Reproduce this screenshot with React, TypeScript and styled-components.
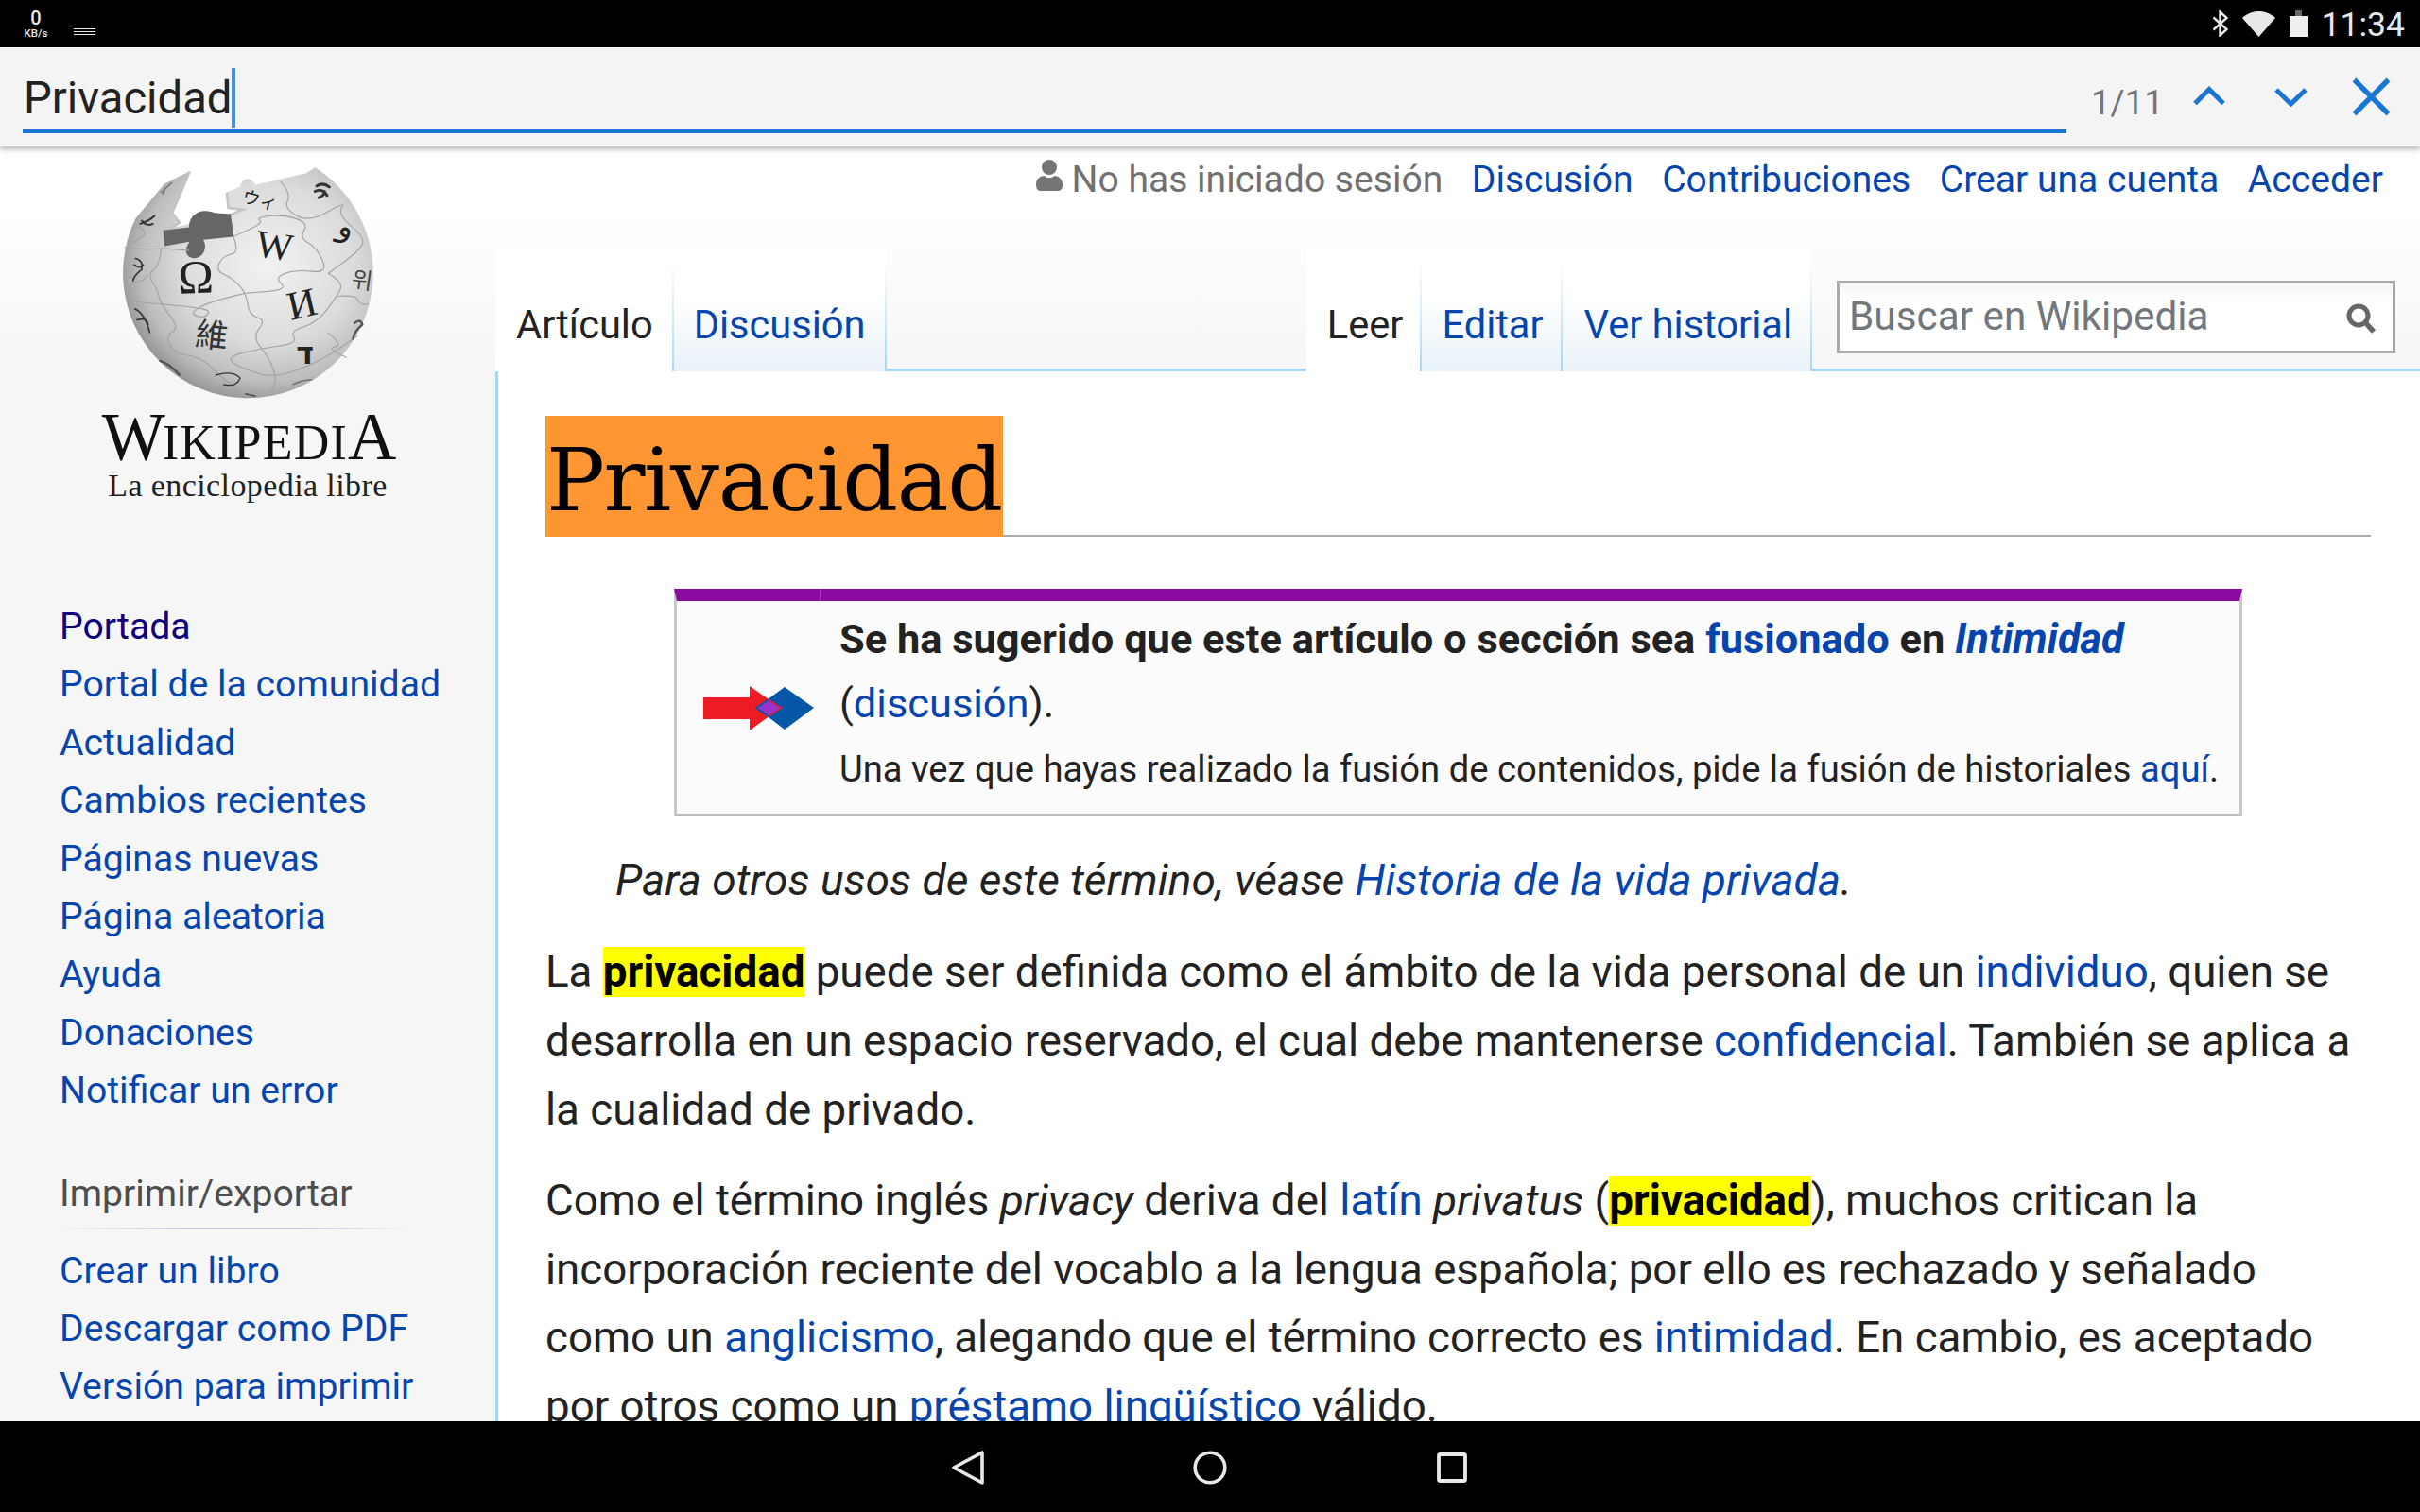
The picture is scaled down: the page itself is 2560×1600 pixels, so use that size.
import React from "react";
import styled, { createGlobalStyle } from "styled-components";

const Global = createGlobalStyle`
  html, body { margin: 0; padding: 0; background: #000; }
  body { font-family: Roboto, "Liberation Sans", sans-serif; color: #222; }
  a { color: #0645ad; text-decoration: none; }
  * { box-sizing: border-box; }
`;

const Screen = styled.div`
  width: 2560px; height: 1600px; display: flex; flex-direction: column; overflow: hidden; background: #fff;
`;

const StatusBar = styled.div`
  height: 50px; flex: none; background: #000; color: #e8e8e8; display: flex; align-items: center; padding: 0 16px 0 24px;
`;
const Speed = styled.div`
  width: 28px; display: flex; flex-direction: column; align-items: center; font-weight: 500; line-height: 1;
`;
const SpeedValue = styled.span` font-size: 20px; height: 21px; `;
const SpeedUnit = styled.span` font-size: 11.5px; white-space: nowrap; `;
const NotifyIcon = styled.svg` margin-left: 26px; margin-top: 16px; `;
const Spacer = styled.div` flex: 1; `;
const StatusIcon = styled.svg` display: block; flex: none; margin-left: ${(p: { $gap: number }) => p.$gap}px; `;
const Clock = styled.span` font-size: 35.5px; margin-left: 15px; line-height: 50px; padding-top: 2px; `;

const FindBar = styled.div`
  height: 105px; flex: none; background: #f4f4f4; box-shadow: 0 3px 5px rgba(0,0,0,.28); position: relative; z-index: 2;
  display: flex; padding: 0 31px 0 24px;
`;
const FindField = styled.div`
  width: 2163px; height: 91px; border-bottom: 4px solid #1976d2; display: flex; align-items: center; padding: 20px 0 0 1px;
  font-size: 47.2px; color: #222;
`;
const Caret = styled.span` width: 4px; height: 63px; background: #4a90d9; `;
const FindCount = styled.span` font-size: 36.5px; color: #757575; margin: 37px 0 0 26px; width: 108px; line-height: 43px; height: 43px;`;
const FindIcon = styled.svg` flex: none; margin-top: ${(p: { $top: number }) => p.$top}px; margin-left: ${(p: { $left?: number }) => p.$left ?? 0}px; `;

const Page = styled.div`
  flex: 1; min-height: 0; overflow: hidden; display: grid; grid-template-columns: 524px 1fr;
  background: linear-gradient(#fff 70px, #f6f6f6 237px);
`;

const Sidebar = styled.aside` padding-top: 10px; `;
const Globe = styled.svg` display: block; margin-left: 100px; `;
const Wordmark = styled.div`
  font-family: "Liberation Serif", serif; color: #111; display: flex; align-items: baseline; justify-content: center; width: 524px;
  height: 60px; line-height: 60px; font-size: 52px; letter-spacing: 1.2px;
`;
const BigCap = styled.span` font-size: 71px; letter-spacing: -3px; `;
const Tagline = styled.div`
  font-family: "Liberation Serif", serif; font-size: 34px; letter-spacing: 0.4px; color: #222; text-align: center; width: 524px; line-height: 44px;
`;
const NavList = styled.ul`
  list-style: none; margin: ${(p: { $top: number }) => p.$top}px 0 0; padding: 0 0 0 63px;
`;
const NavItem = styled.li`
  height: 61.4px; line-height: 61.4px; font-size: 39.2px; white-space: nowrap;
`;
const VisitedLink = styled.a` color: #0b0080; `;
const PortletTitle = styled.div`
  margin: 55px 0 0 63px; width: 370px; height: 74px; line-height: 45px; font-size: 39.2px; color: #4d4d4d;
  background: linear-gradient(to right, transparent, #c8ccd1 35%, #c8ccd1 70%, transparent) left 58px / 100% 2px no-repeat;
`;

const Main = styled.main` min-width: 0; display: flex; flex-direction: column; `;
const PersonalBar = styled.div`
  height: 107px; flex: none; display: flex; justify-content: flex-end; align-items: flex-start; gap: 30.5px; padding: 12px 39px 0 0; font-size: 39.1px; line-height: 46px;
`;
const LoginStatus = styled.span` display: flex; align-items: flex-start; color: #707070; `;
const UserIcon = styled.svg` margin: 2px 10px 0 0; display: block; `;
const TabRow = styled.div`
  height: 131px; flex: none; display: flex; border-bottom: 3px solid #a7d7f9; padding-right: 26px;
`;
const Tab = styled.a<{ $selected?: boolean; $left?: number; $right?: number }>`
  display: flex; align-items: center; padding: 32px ${(p) => p.$right ?? 21}px 0 ${(p) => p.$left ?? 21}px; margin-bottom: -3px; font-size: 41.6px; white-space: nowrap;
  color: ${(p) => (p.$selected ? "#222" : "#0645ad")};
  background: ${(p) => (p.$selected ? "#fff" : "linear-gradient(#fff 40%, #e8f2f8)")};
  border-right: 2px solid; border-image: linear-gradient(#fff0 10%, #a7d7f9) 1;
`;
const SearchBox = styled.div`
  width: 591px; height: 77px; margin: 35px 0 0 26px; border: 3px solid #aaa; background: linear-gradient(#f6f6f6, #fff 30%); flex: none;
  display: flex; align-items: center; justify-content: space-between; padding: 0 17px 3px 10px; font-size: 42.3px; color: #72777d;
`;
const SearchIcon = styled.svg` display: block; margin-top: 6px; `;

const Article = styled.article`
  flex: 1; background: #fff; border-left: 3px solid #a7d7f9; padding: 47px 52px 0 50px; font-size: 45.7px; line-height: 72.9px; color: #222;
`;
const Title = styled.h1`
  margin: 0; height: 128px; border-bottom: 2px solid #aaa; font-weight: 400; display: flex;
`;
const TitleMark = styled.span`
  height: 128px; width: 484px; background: #ff9632; color: #000; font-family: "DejaVu Serif", serif; font-size: 92px; line-height: 137px; padding: 0 0 0 1px; letter-spacing: -1.4px; display: block; white-space: nowrap;
`;
const NoticeBox = styled.section`
  margin: 55px 0 0 136px; width: 1659px; border-top: 13px solid #8b0a9f; border-left: 3px solid #c8c8c8; border-right: 3px solid #c8c8c8; border-bottom: 3px solid #bbb;
  background: #fbfbfb; display: flex; align-items: center; padding: 0 0 6px 28px; height: 241px; position: relative;
  &::before { content: ""; position: absolute; left: 151px; top: -13px; width: 1px; height: 13px; background: #a93cbb; }
`;
const NoticeIcon = styled.svg` flex: none; display: block; margin: 8px 26px 0 0; `;
const NoticeLine = styled.div<{ $small?: boolean; $bold?: boolean }>`
  height: 68.5px; line-height: 68.5px; white-space: nowrap;
  font-size: ${(p) => (p.$small ? "38.2px" : "43.4px")};
  font-weight: ${(p) => (p.$bold ? 700 : 400)};
`;
const Hatnote = styled.div` margin: 31px 0 0 74px; font-style: italic; font-size: 46.1px; `;
const Para = styled.p`
  margin: ${(p: { $top: number }) => p.$top}px 0 0;
  i { font-size: 46.1px; }
`;
const Hit = styled.b` background: #ffff00; color: #000; `;

const NavBar = styled.div`
  height: 96px; flex: none; background: #000; display: flex; justify-content: center; align-items: center; gap: 220px; padding: 1px 2px 0 0;
`;
const NavIcon = styled.svg` display: block; `;
const NavSquare = styled(NavIcon)` margin-left: 2px; `;

type Pt = [number, number];
const smooth = (pts: Pt[]) => {
  let d = `M${pts[0][0]} ${pts[0][1]}`;
  for (let i = 1; i < pts.length - 1; i++) {
    const mx = (pts[i][0] + pts[i + 1][0]) / 2;
    const my = (pts[i][1] + pts[i + 1][1]) / 2;
    d += ` Q${pts[i][0]} ${pts[i][1]} ${mx} ${my}`;
  }
  const l = pts[pts.length - 1];
  return d + ` L${l[0]} ${l[1]}`;
};

const seams: Pt[][] = [
  [[95, 290], [160, 298], [215, 292], [300, 300]],
  [[440, 255], [462, 305], [405, 318], [385, 365], [435, 385], [482, 435], [490, 505], [545, 520], [500, 575], [555, 640], [580, 715], [555, 752]],
  [[105, 460], [210, 470], [320, 480], [368, 490], [350, 515], [300, 500], [360, 465], [480, 435]],
  [[212, 292], [205, 350], [168, 375], [200, 425], [210, 470], [270, 545], [225, 570], [250, 625], [340, 640], [400, 700], [480, 762]],
  [[440, 255], [540, 215], [510, 195], [600, 185], [680, 212], [650, 260], [705, 290], [742, 372], [640, 360], [570, 385], [615, 425], [482, 435]],
  [[742, 372], [790, 400], [770, 445], [705, 530], [620, 555], [645, 595], [530, 610], [410, 640], [482, 680], [575, 705], [720, 650], [835, 570]],
  [[590, 80], [625, 120], [600, 165], [680, 212], [800, 142], [770, 185], [862, 262], [835, 305], [742, 372]],
  [[740, 560], [790, 600], [740, 610], [800, 640]],
  [[130, 220], [175, 240], [130, 270], [100, 290]],
  [[105, 460], [110, 400], [150, 400], [170, 375]],
  [[770, 445], [830, 440], [840, 470], [870, 470]],
];

const globeOutline =
  "M302 48 L222 88 L130 198 A397 397 0 1 0 700 36 L672 54 L510 92 C500 68 470 62 462 98 L420 115 L425 165 L470 170 L430 186 L212 236 L210 280 L270 212 L246 180 L268 130 Z";
const gapEdge = "M302 48 L268 130 L246 180 L270 212 L215 240 M420 115 L425 165 L470 170 L432 186";
const darkPiece =
  "M218 236 L300 226 C298 200 318 174 350 174 C372 174 372 182 432 183 L442 256 L345 266 C360 290 345 324 318 324 C296 324 278 304 302 272 L222 286 Z";

const WikiGlobe = () => (
  <Globe width="340" height="267" viewBox="0 0 1020 800">
    <defs>
      <radialGradient id="g" cx="0.58" cy="0.42" r="0.62">
        <stop offset="0" stopColor="#f2f2f2" />
        <stop offset="0.55" stopColor="#dcdcdc" />
        <stop offset="0.82" stopColor="#bdbdbd" />
        <stop offset="1" stopColor="#8f8f8f" />
      </radialGradient>
    </defs>
    <path d={globeOutline} fill="url(#g)" />
    <path d={gapEdge} fill="none" stroke="#c4c4c4" strokeWidth="8" />
    <path d={darkPiece} fill="#666" />
    <g fill="none" stroke="#a3a3a3" strokeWidth="3.5">
      {seams.map((s, i) => <path key={i} d={smooth(s)} />)}
    </g>
    <g fill="#222">
      <text x="322" y="435" fontFamily="Liberation Serif" fontSize="150" textAnchor="middle" transform="rotate(-2 322 400)">Ω</text>
      <text x="570" y="326" fontFamily="Liberation Serif" fontSize="124" textAnchor="middle" transform="rotate(8 570 290)">W</text>
      <text x="660" y="512" fontFamily="Liberation Serif" fontSize="128" textAnchor="middle" transform="rotate(-13 660 480)">И</text>
      <text x="372" y="606" fontFamily="Noto Sans CJK TC" fontSize="104" textAnchor="middle" fill="#333" transform="rotate(6 372 570)">維</text>
      <text x="525" y="160" fontFamily="Noto Sans CJK JP" fontSize="56" textAnchor="middle" transform="rotate(14 525 140)">ウィ</text>
      <text x="798" y="258" fontFamily="DejaVu Sans" fontSize="100" textAnchor="middle" transform="rotate(20 798 235)">و</text>
      <text x="850" y="420" fontFamily="Noto Sans CJK KR" fontSize="72" textAnchor="middle" fill="#444" transform="rotate(8 850 390)">위</text>
      <text x="668" y="660" fontFamily="DejaVu Sans" fontSize="96" textAnchor="middle" fontWeight="700">ד</text>
    </g>
    <g fill="none" stroke="#333" strokeWidth="6" strokeLinecap="round">
      <path d="M705 95 Q725 82 745 98 M700 112 Q722 100 738 125 M712 132 Q730 125 730 112" strokeWidth="9" />
      <path d="M145 215 Q175 205 190 190 M150 205 Q165 225 185 215" />
      <path d="M212 115 L245 85 M225 100 L218 120" strokeWidth="5" stroke="#777" />
      <path d="M130 325 Q155 330 150 360 Q125 380 122 395 M125 345 Q145 360 155 345" strokeWidth="5" />
      <path d="M128 485 Q160 500 175 560 M135 520 Q165 510 170 535" strokeWidth="5" />
      <path d="M208 650 Q240 660 270 695" strokeWidth="7" stroke="#555" />
      <path d="M385 695 Q440 680 462 705 Q450 735 410 725" strokeWidth="4" />
      <path d="M825 530 Q845 515 850 535 Q825 555 820 580" strokeWidth="7" stroke="#555" />
      <path d="M630 725 Q660 710 690 710" strokeWidth="4" stroke="#666" />
      <path d="M480 755 L510 762" strokeWidth="5" stroke="#555" />
    </g>
  </Globe>
);

const mainNav = ["Portal de la comunidad", "Actualidad", "Cambios recientes", "Páginas nuevas", "Página aleatoria", "Ayuda", "Donaciones", "Notificar un error"];
const exportNav = ["Crear un libro", "Descargar como PDF", "Versión para imprimir"];

export default function App() {
  return (
    <Screen>
      <Global />
      <StatusBar>
        <Speed><SpeedValue>0</SpeedValue><SpeedUnit>KB/s</SpeedUnit></Speed>
        <NotifyIcon width="23" height="7" viewBox="0 0 23 7"><path d="M0 .5H23M0 3.5H23M0 6.5H23" stroke="#e8e8e8" strokeWidth="1.2" /></NotifyIcon>
        <Spacer />
        <StatusIcon $gap={0} width="18" height="28" viewBox="0 0 18 28">
          <path d="M1.5 7.5 L15.5 20 L8.5 26.5 V1.5 L15.5 8 L1.5 20.5" fill="none" stroke="#e8e8e8" strokeWidth="2.4" />
        </StatusIcon>
        <StatusIcon $gap={14} width="35" height="27" viewBox="0 0 35 27"><path d="M17.5 27 L0 7 C10 -2.3 25 -2.3 35 7 Z" fill="#e8e8e8" /></StatusIcon>
        <StatusIcon $gap={15} width="19" height="28" viewBox="0 0 19 28">
          <path d="M0 6 H6 V0 H13 V6 H19 V28 H0 Z" fill="#666" />
          <rect y="6" width="19" height="22" fill="#eee" />
        </StatusIcon>
        <Clock>11:34</Clock>
      </StatusBar>
      <FindBar>
        <FindField>Privacidad<Caret /></FindField>
        <FindCount>1/11</FindCount>
        <FindIcon $top={41} width="34" height="21" viewBox="0 0 34 21"><path d="M2 18.5 L17 3.5 L32 18.5" fill="none" stroke="#1976d2" strokeWidth="5" /></FindIcon>
        <FindIcon $top={43} $left={52} width="35" height="20" viewBox="0 0 35 20"><path d="M2 2 L17.5 17 L33 2" fill="none" stroke="#1976d2" strokeWidth="5" /></FindIcon>
        <FindIcon $top={32} $left={47} width="41" height="41" viewBox="0 0 41 41"><path d="M2.5 2.5 L38.5 38.5 M38.5 2.5 L2.5 38.5" fill="none" stroke="#1976d2" strokeWidth="5.4" /></FindIcon>
      </FindBar>
      <Page>
        <Sidebar>
          <WikiGlobe />
          <Wordmark><BigCap>W</BigCap>IKIPEDI<BigCap>A</BigCap></Wordmark>
          <Tagline>La enciclopedia libre</Tagline>
          <NavList $top={97}>
            <NavItem><VisitedLink>Portada</VisitedLink></NavItem>
            {mainNav.map((t) => <NavItem key={t}><a>{t}</a></NavItem>)}
          </NavList>
          <PortletTitle>Imprimir/exportar</PortletTitle>
          <NavList $top={0}>
            {exportNav.map((t) => <NavItem key={t}><a>{t}</a></NavItem>)}
          </NavList>
        </Sidebar>
        <Main>
          <PersonalBar>
            <LoginStatus>
              <UserIcon width="28" height="33" viewBox="0 0 28 33">
                <circle cx="14" cy="8" r="8" fill="#757575" />
                <path d="M0 26 C0 20 5 17 9 17 C11 20 17 20 19 17 C23 17 28 20 28 26 C28 31 26 33 23 33 H5 C2 33 0 31 0 26 Z" fill="#757575" />
              </UserIcon>
              No has iniciado sesión
            </LoginStatus>
            <a>Discusión</a>
            <a>Contribuciones</a>
            <a>Crear una cuenta</a>
            <a>Acceder</a>
          </PersonalBar>
          <TabRow>
            <Tab $selected $left={22} $right={20}>Artículo</Tab>
            <Tab $right={20}>Discusión</Tab>
            <Spacer />
            <Tab $selected $left={22} $right={18}>Leer</Tab>
            <Tab $left={21} $right={18}>Editar</Tab>
            <Tab $left={23} $right={19}>Ver historial</Tab>
            <SearchBox>
              Buscar en Wikipedia
              <SearchIcon width="32" height="32" viewBox="0 0 32 32">
                <circle cx="13" cy="13" r="10" fill="none" stroke="#666" strokeWidth="5" />
                <path d="M20 20 L29 30" stroke="#666" strokeWidth="5.5" />
              </SearchIcon>
            </SearchBox>
          </TabRow>
          <Article>
            <Title><TitleMark>Privacidad</TitleMark></Title>
            <NoticeBox>
              <NoticeIcon width="118" height="47" viewBox="0 0 118 47">
                <path d="M56 23 L86 1 L117 23 L86 46 Z" fill="#0457a6" />
                <path d="M0 12 H49 V0 L82 23 L49 47 V35 H0 Z" fill="#ed1c24" />
                <path d="M56 23 L69 14.5 L82 23 L69 32 Z" fill="#9932cc" />
                <path d="M69 14.5 L56 23 L69 32" fill="none" stroke="#0457a6" strokeWidth="2" />
                <path d="M69 14.5 L82 23 L69 32" fill="none" stroke="#d0213f" strokeWidth="2" />
              </NoticeIcon>
              <div>
                <NoticeLine $bold>Se ha sugerido que este artículo o sección sea <a>fusionado</a> en <a><i>Intimidad</i></a></NoticeLine>
                <NoticeLine>(<a>discusión</a>).</NoticeLine>
                <NoticeLine $small>Una vez que hayas realizado la fusión de contenidos, pide la fusión de historiales <a>aquí</a>.</NoticeLine>
              </div>
            </NoticeBox>
            <Hatnote>Para otros usos de este término, véase <a>Historia de la vida privada</a>.</Hatnote>
            <Para $top={25}>La <Hit>privacidad</Hit> puede ser definida como el ámbito de la vida personal de un <a>individuo</a>, quien se desarrolla en un espacio reservado, el cual debe mantenerse <a>confidencial</a>. También se aplica a la cualidad de privado.</Para>
            <Para $top={22}>Como el término inglés <i>privacy</i> deriva del <a>latín</a> <i>privatus</i> (<Hit>privacidad</Hit>), muchos critican la incorporación reciente del vocablo a la lengua española; por ello es rechazado y señalado como un <a>anglicismo</a>, alegando que el término correcto es <a>intimidad</a>. En cambio, es aceptado por otros como un <a>préstamo lingüístico</a> válido.</Para>
          </Article>
        </Main>
      </Page>
      <NavBar>
        <NavIcon width="36" height="38" viewBox="0 0 36 38"><path d="M33 3 V35 L3 19 Z" fill="none" stroke="#e8e8e8" strokeWidth="3.6" strokeLinejoin="round" /></NavIcon>
        <NavIcon width="36" height="36" viewBox="0 0 36 36"><circle cx="18" cy="18" r="15.8" fill="none" stroke="#e8e8e8" strokeWidth="3.6" /></NavIcon>
        <NavSquare width="32" height="32" viewBox="0 0 32 32"><rect x="2" y="2" width="28" height="28" rx="1.5" fill="none" stroke="#e8e8e8" strokeWidth="3.8" /></NavSquare>
      </NavBar>
    </Screen>
  );
}
